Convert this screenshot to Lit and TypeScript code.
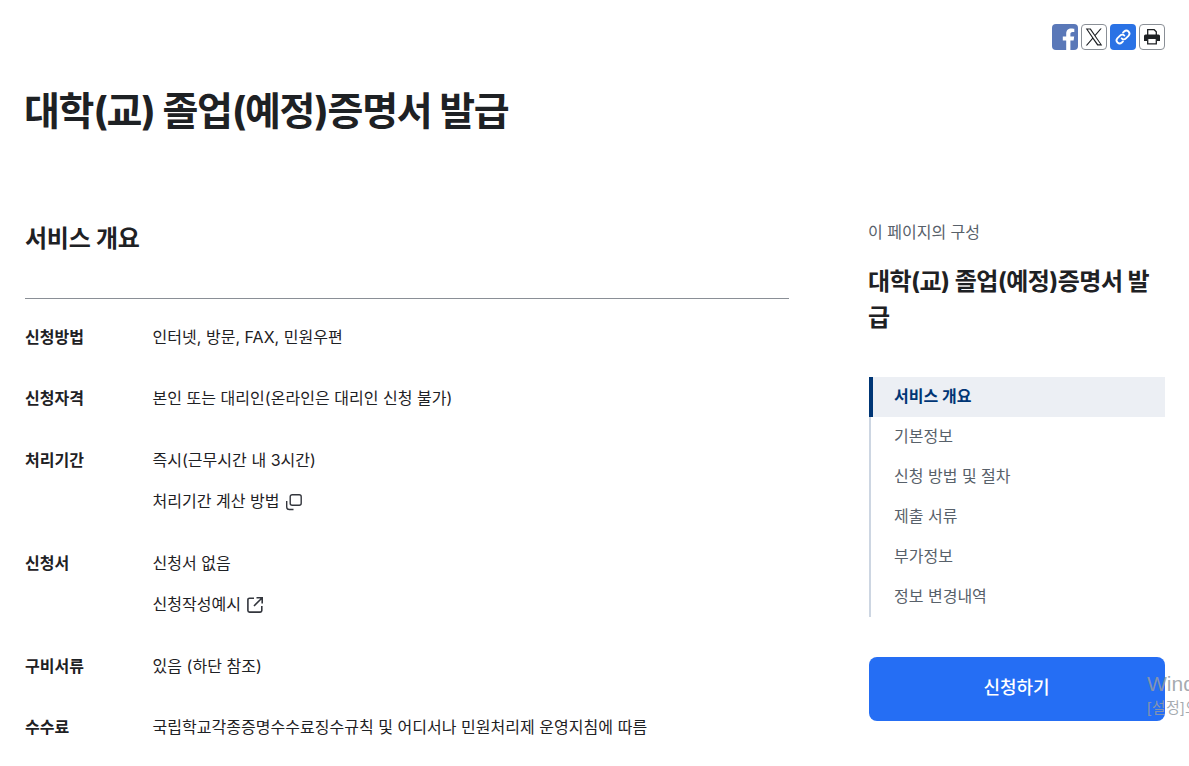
import { LitElement, html, css } from 'lit';
import { customElement } from 'lit/decorators.js';

const rows = [
  { label: '신청방법', lines: [{ text: '인터넷, 방문, FAX, 민원우편' }] },
  { label: '신청자격', lines: [{ text: '본인 또는 대리인(온라인은 대리인 신청 불가)' }] },
  { label: '처리기간', lines: [{ text: '즉시(근무시간 내 3시간)' }, { text: '처리기간 계산 방법', icon: 'copy' }] },
  { label: '신청서', lines: [{ text: '신청서 없음' }, { text: '신청작성예시', icon: 'open' }] },
  { label: '구비서류', lines: [{ text: '있음 (하단 참조)' }] },
  { label: '수수료', lines: [{ text: '국립학교각종증명수수료징수규칙 및 어디서나 민원처리제 운영지침에 따름' }] },
];

const toc = ['서비스 개요', '기본정보', '신청 방법 및 절차', '제출 서류', '부가정보', '정보 변경내역'];

@customElement('app-root')
export class AppRoot extends LitElement {
  static styles = css`
    :host {
      display: block;
      height: 766px;
      overflow: hidden;
      position: relative;
      background: #fff;
      color: #1e2124;
      font-family: Inter, "Noto Sans CJK KR", sans-serif;
    }
    .share {
      display: flex;
      justify-content: flex-end;
      gap: 3px;
      padding: 24px 24px 0 0;
    }
    .share-btn {
      width: 26px;
      height: 26px;
      box-sizing: border-box;
      border-radius: 4px;
      display: flex;
      align-items: center;
      justify-content: center;
      overflow: hidden;
    }
    .fb { background: #5a78b8; align-items: flex-end; }
    .x { border: 1px solid #8a8f96; background: #fff; }
    .link { background: #2a72e5; }
    .print { border: 1px solid #8a8f96; background: #fff; }
    h1 {
      margin: 31px 0 0;
      padding-left: 24px;
      font-size: 39px;
      line-height: 60px;
      font-weight: 700;
      letter-spacing: -1.3px;
      color: #1e2124;
    }
    .content {
      display: flex;
      justify-content: space-between;
      padding: 74px 24px 0 25px;
    }
    main { width: 764px; }
    h2 {
      margin: 0;
      padding-top: 6px;
      height: 77px;
      font-size: 24px;
      line-height: 36px;
      font-weight: 700;
      letter-spacing: -0.25px;
      border-bottom: 1px solid #8a8f96;
    }
    .rows { padding-top: 25px; }
    .row {
      display: flex;
      margin-bottom: 34.4px;
    }
    .label {
      width: 127.5px;
      flex: none;
      font-size: 16px;
      line-height: 27px;
      font-weight: 700;
    }
    .lines { display: flex; flex-direction: column; gap: 14.6px; }
    .line {
      font-size: 16px;
      line-height: 27px;
      letter-spacing: 0.03px;
      display: flex;
      align-items: center;
      gap: 5px;
    }
    aside { width: 296px; flex: none; padding-top: 5px; }
    .toc-caption { font-size: 16px; line-height: 24px; color: #58616a; margin-left: -1px; }
    .toc-title {
      margin: 20px 0 0 -1px;
      font-size: 24px;
      line-height: 36px;
      font-weight: 700;
      letter-spacing: -0.55px;
    }
    nav {
      margin-top: 41px;
      border-left: 2px solid #cdd6e2;
    }
    .toc-item {
      height: 40px;
      line-height: 38px;
      padding-left: 23px;
      font-size: 16px;
      color: #58616a;
    }
    .toc-item.active {
      margin-left: -2px;
      border-left: 4px solid #003675;
      background: #eceff4;
      color: #003675;
      font-weight: 700;
      padding-left: 21px;
    }
    .apply {
      margin-top: 40px;
      height: 64px;
      box-sizing: border-box;
      padding: 0 1px 6px 0;
      border-radius: 8px;
      background: #256ef4;
      color: #fff;
      font-size: 18px;
      font-weight: 500;
      display: flex;
      align-items: center;
      justify-content: center;
    }
    .watermark {
      position: absolute;
      left: 1147px;
      top: 670px;
      color: rgba(150, 155, 162, 0.85);
      white-space: nowrap;
      font-family: "Liberation Sans", "Noto Sans CJK KR", sans-serif;
    }
    .watermark div:first-child { font-size: 21px; line-height: 28px; }
    .watermark div:last-child { font-size: 15px; line-height: 20px; letter-spacing: 0.5px; }
  `;

  private lineIcon(kind?: string) {
    if (kind === 'copy')
      return html`<svg width="18" height="18" viewBox="0 0 18 18" fill="none" stroke="#33363d" stroke-width="1.4"><rect x="5.2" y="1.7" width="11" height="10.6" rx="2"/><path d="M1.700 8v6a2.500 2.500 0 0 0 2.500 2.500h4.300"/></svg>`;
    if (kind === 'open')
      return html`<svg width="18" height="18" viewBox="0 0 18 18" fill="none" stroke="#33363d" stroke-width="1.6"><path d="M8 2.200H3.500a1.600 1.600 0 0 0-1.600 1.600v10.700a1.600 1.600 0 0 0 1.600 1.600h10.700a1.600 1.600 0 0 0 1.600-1.600V10"/><path d="M10.500 1.800h5.700v5.700M16 2 8 10"/></svg>`;
    return '';
  }

  render() {
    return html`
      <div class="share">
        <div class="share-btn fb">
          <svg width="26" height="26" viewBox="0 0 26 26"><path fill="#fff" d="M18.400 26v-9.600h3.200l.6-3.900h-3.800v-2.400c0-1.100.5-2.100 2.200-2.100h1.700V4.700s-1.600-.3-3-.3c-3.100 0-5.100 1.900-5.100 5.200v2.900h-3.400v3.900h3.400V26z"/></svg>
        </div>
        <div class="share-btn x">
          <svg width="18" height="18" viewBox="0 0 24 24"><path fill="#1e2124" d="M14.100 10.200 22.300.7h-1.900l-7.100 8.200L7.600.7H1l8.600 12.500L1 23.300h1.900l7.500-8.800 6 8.800H23zm-2.700 3.100-.9-1.200L3.600 2.100h3l5.600 8 .9 1.200 7.300 10.500h-3z"/></svg>
        </div>
        <div class="share-btn link">
          <svg width="18" height="18" viewBox="0 0 18 18" fill="none" stroke="#fff" stroke-width="1.8" stroke-linecap="round"><path d="M7.600 10.400a3 3 0 0 0 4.300 0l2.600-2.600a3 3 0 0 0-4.300-4.300L9 4.700"/><path d="M10.400 7.600a3 3 0 0 0-4.300 0l-2.600 2.600a3 3 0 0 0 4.300 4.300L9 13.300"/></svg>
        </div>
        <div class="share-btn print">
          <svg width="18" height="18" viewBox="0 0 18 18"><path fill="none" stroke="#1e2124" stroke-width="1.3" d="M4.700 7V1.700h6.500l2.100 2.100V7"/><path fill="#1e2124" d="M2.500 6.500h13A1.500 1.500 0 0 1 17 8v5h-3v-2H4v2H1V8a1.500 1.500 0 0 1 1.500-1.500z"/><path fill="none" stroke="#1e2124" stroke-width="1.300" d="M4.700 11v4.800h8.600V11"/></svg>
        </div>
      </div>
      <h1>대학(교) 졸업(예정)증명서 발급</h1>
      <div class="content">
        <main>
          <h2>서비스 개요</h2>
          <div class="rows">
            ${rows.map(
              (r) => html`
                <div class="row">
                  <div class="label">${r.label}</div>
                  <div class="lines">
                    ${r.lines.map((l) => html`<div class="line">${l.text}${this.lineIcon(l.icon)}</div>`)}
                  </div>
                </div>
              `,
            )}
          </div>
        </main>
        <aside>
          <div class="toc-caption">이 페이지의 구성</div>
          <h3 class="toc-title">대학(교) 졸업(예정)증명서 발급</h3>
          <nav>
            ${toc.map((t, i) => html`<div class="toc-item ${i === 0 ? 'active' : ''}">${t}</div>`)}
          </nav>
          <div class="apply">신청하기</div>
        </aside>
      </div>
      <div class="watermark"><div>Windows 정품 인증</div><div>[설정]으로 이동하여 Windows를 정품 인증합니다.</div></div>
    `;
  }
}
